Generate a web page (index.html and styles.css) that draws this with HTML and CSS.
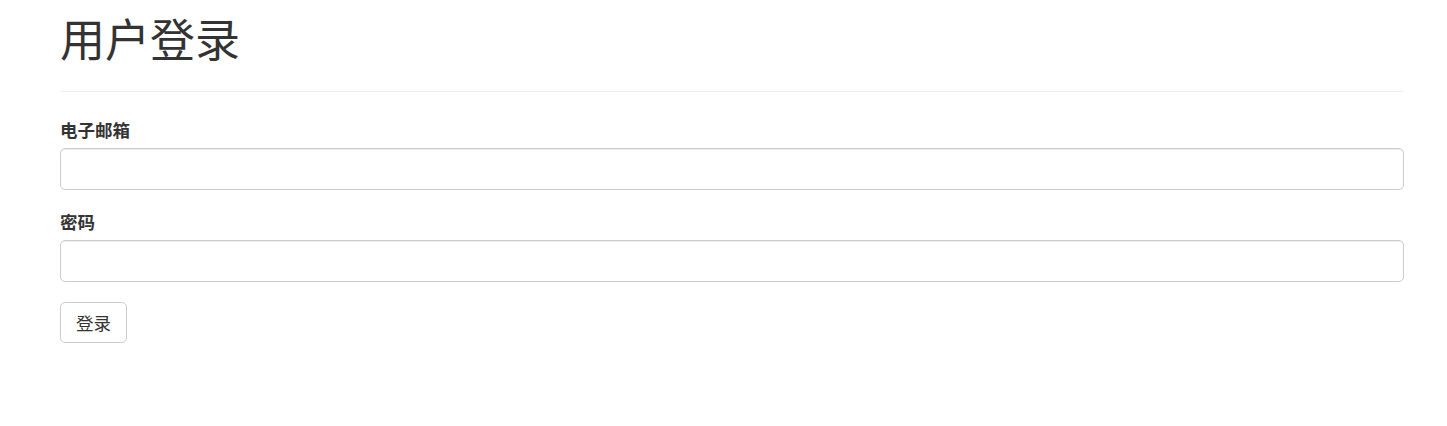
FILE: index.html
```html
<!DOCTYPE html>
<html lang="zh-CN">
<head>
<meta charset="utf-8">
<title>用户登录</title>
<link rel="stylesheet" href="styles.css">
</head>
<body>
<div class="container">
  <div class="page-header">
    <h1 class="title">用户登录</h1>
  </div>
  <form class="login-form">
    <div class="form-group">
      <label class="form-label" for="email">电子邮箱</label>
      <input class="form-control" id="email" type="email">
    </div>
    <div class="form-group">
      <label class="form-label" for="password">密码</label>
      <input class="form-control" id="password" type="password">
    </div>
    <button class="btn" type="submit">登录</button>
  </form>
</div>
</body>
</html>
```

FILE: styles.css
```css
html, body {
  margin: 0;
  padding: 0;
  background: #fff;
}
body {
  font-family: "Noto Sans CJK SC", "Liberation Sans", sans-serif;
  color: #333;
  font-size: 17.5px;
}
.container {
  margin-left: 60px;
  width: 1344px;
}
.page-header {
  padding: 13px 0 16px;
  border-bottom: 1px solid #eee;
  margin-bottom: 25px;
}
.title {
  margin: 0 0 12px;
  font-size: 45px;
  font-weight: 400;
  line-height: 49.5px;
  color: #333;
}
.login-form {
  display: flex;
  flex-direction: column;
  align-items: flex-start;
}
.form-group {
  align-self: stretch;
  margin-bottom: 19px;
}
.form-label {
  display: block;
  font-weight: 700;
  line-height: 25px;
  margin-bottom: 6px;
}
.form-control {
  display: block;
  box-sizing: border-box;
  width: 100%;
  height: 42px;
  margin: 0;
  padding: 7px 15px;
  font-size: 17.5px;
  border: 1px solid #ccc;
  border-radius: 5px;
  background: #fff;
  box-shadow: inset 0 1px 1px rgba(0,0,0,.075);
  outline: none;
}
.btn {
  box-sizing: border-box;
  height: 41px;
  width: 67px;
  margin-top: 1px;
  padding: 0;
  font-family: "Noto Sans CJK SC", "Liberation Sans", sans-serif;
  font-size: 17.5px;
  line-height: 25px;
  color: #333;
  background: #fff;
  border: 1px solid #ccc;
  border-radius: 5px;
  cursor: pointer;
}
```
